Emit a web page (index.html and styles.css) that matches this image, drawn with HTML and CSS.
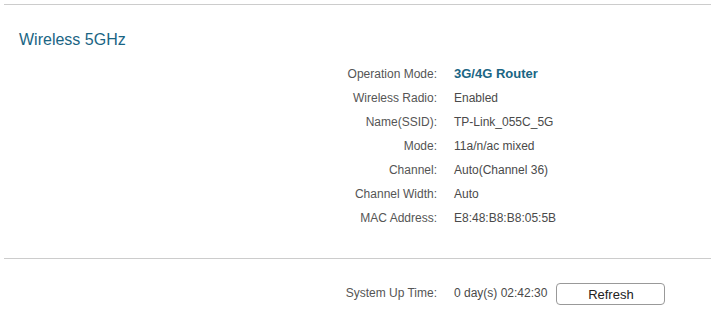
FILE: index.html
```html
<!DOCTYPE html>
<html lang="en">
<head>
    <meta charset="UTF-8">
    <title>Wireless 5GHz</title>
    <link rel="stylesheet" href="styles.css">
</head>
<body>
    <div class="panel">
        <h2 class="title">Wireless 5GHz</h2>
        <div class="info">
            <div class="label">Operation Mode:</div>
            <div class="value strong">3G/4G Router</div>
            <div class="label">Wireless Radio:</div>
            <div class="value">Enabled</div>
            <div class="label">Name(SSID):</div>
            <div class="value">TP-Link_055C_5G</div>
            <div class="label">Mode:</div>
            <div class="value">11a/n/ac mixed</div>
            <div class="label">Channel:</div>
            <div class="value">Auto(Channel 36)</div>
            <div class="label">Channel Width:</div>
            <div class="value">Auto</div>
            <div class="label">MAC Address:</div>
            <div class="value">E8:48:B8:B8:05:5B</div>
        </div>
    </div>
    <div class="panel footer">
        <div class="info uptime">
            <div class="label">System Up Time:</div>
            <div class="value">
                <span>0 day(s) 02:42:30</span>
                <button class="btn">Refresh</button>
            </div>
        </div>
    </div>
</body>
</html>
```

FILE: styles.css
```css
body {
    margin: 0;
    font-family: "Liberation Sans", Arial, sans-serif;
    color: #555;
    background: #fff;
}
.panel {
    margin-left: 4px;
    border-top: 1px solid #ccc;
}
.panel:first-child {
    margin-top: 4px;
    height: 253px;
}
.title {
    margin: 0;
    padding: 25px 0 0 15px;
    height: 32px;
    font-size: 16px;
    line-height: 20px;
    font-weight: normal;
    color: #1a6584;
}
.info {
    display: grid;
    grid-template-columns: 433px 1fr;
    column-gap: 17px;
    font-size: 12px;
    line-height: 24px;
}
.label {
    text-align: right;
}
.value {
    color: #4a4a4a;
}
.value.strong {
    font-size: 13px;
    font-weight: bold;
    color: #1a6584;
}
.uptime {
    padding-top: 22px;
}
.uptime .value {
    display: flex;
    align-items: center;
    gap: 9px;
}
.btn {
    width: 109px;
    height: 22px;
    margin-top: 2px;
    border: 1px solid #999;
    border-radius: 4px;
    background: #fff;
    color: #222;
    font-family: inherit;
    font-size: 13px;
    padding: 0;
}
```
